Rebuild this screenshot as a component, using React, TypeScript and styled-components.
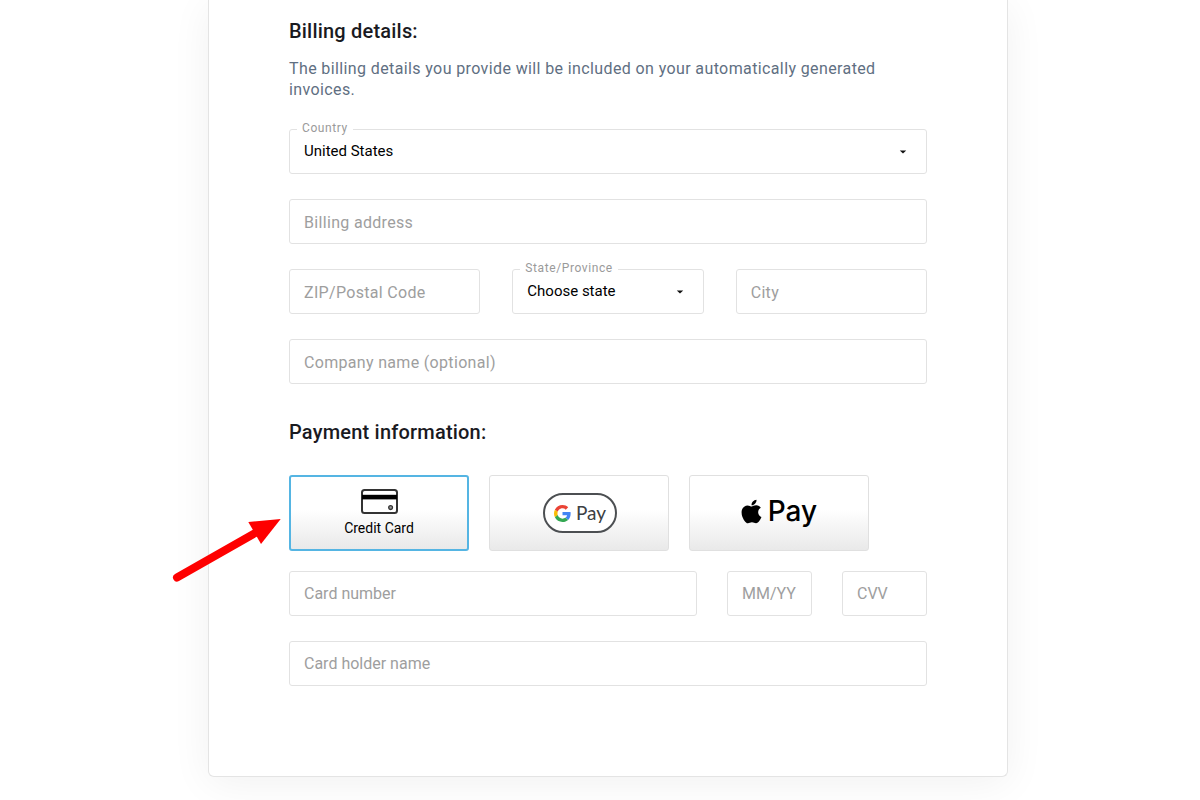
import React, { useState } from "react";
import styled, { createGlobalStyle, css } from "styled-components";
import { FaApple } from "react-icons/fa";

const GlobalStyle = createGlobalStyle`
  *, *::before, *::after { box-sizing: border-box; }
  body {
    margin: 0;
    background: #ffffff;
    font-family: Roboto, "Liberation Sans", sans-serif;
    color: #1a1a1a;
  }
`;

const Page = styled.main`
  display: flex;
  justify-content: center;
  padding: 0 16px 23px 32px;
  overflow: hidden;
`;

const Card = styled.form`
  width: 100%;
  max-width: 800px;
  padding: 19px 80px 90px;
  background: #ffffff;
  border: 1px solid #e4e4e4;
  border-top: 0;
  border-radius: 0 0 6px 6px;
  box-shadow: 0 6px 40px rgba(0, 0, 0, 0.06);
`;

const Heading = styled.h2`
  margin: 0;
  font-size: 20px;
  line-height: 24px;
  font-weight: 500;
  letter-spacing: 0.01em;
  color: #1a1a1f;
`;

const Note = styled.p`
  margin: 15px 0 29px;
  font-size: 16px;
  line-height: 21px;
  letter-spacing: 0.024em;
  color: #5f6f82;
`;

const Fields = styled.div`
  display: grid;
  gap: 25px;
`;

const LocationRow = styled.div`
  display: grid;
  grid-template-columns: repeat(3, minmax(0, 1fr));
  gap: 32px;
`;

const CardRow = styled.div`
  display: grid;
  grid-template-columns: minmax(0, 1fr) 85px 85px;
  gap: 30px;
`;

const fieldBox = css`
  width: 100%;
  height: 45px;
  border: 1px solid #e2e2e2;
  border-radius: 3px;
  background: #ffffff;
  font-family: inherit;
  outline: none;

  &:focus-visible {
    border-color: #4fb0dc;
  }
`;

const TextInput = styled.input<{ $tracked?: boolean }>`
  ${fieldBox}
  display: block;
  padding: ${(p) => (p.$tracked ? "2px 14px 0" : "0 14px")};
  font-size: 16px;
  letter-spacing: ${(p) => (p.$tracked ? "0.02em" : "normal")};
  color: #111111;

  &::placeholder {
    color: #9e9e9e;
    opacity: 1;
  }
`;

const SelectField = styled.div`
  position: relative;
`;

const FloatingLabel = styled.label`
  position: absolute;
  top: -8px;
  left: 8px;
  padding: 0 5px;
  background: #ffffff;
  font-size: 12px;
  line-height: 14px;
  letter-spacing: 0.05em;
  color: #9a9a9a;
`;

const Select = styled.select`
  ${fieldBox}
  display: block;
  appearance: none;
  padding: 0 40px 1px 14px;
  font-size: 15px;
  color: #000000;
`;

const Caret = styled.svg`
  position: absolute;
  top: 21px;
  right: 20px;
  width: 8px;
  height: 4px;
  fill: #111111;
  pointer-events: none;
`;

const PaymentHeading = styled(Heading)`
  margin-top: 36px;
`;

const Methods = styled.div`
  position: relative;
  display: grid;
  grid-template-columns: repeat(3, minmax(0, 180px));
  gap: 20px;
  margin: 31px 0 20px;
`;

const Method = styled.button<{ $selected: boolean }>`
  display: flex;
  flex-direction: column;
  align-items: center;
  justify-content: center;
  height: 76px;
  padding: 0;
  border: ${(p) => (p.$selected ? "2px solid #55b5e3" : "1px solid #e0e0e0")};
  border-radius: 3px;
  background: linear-gradient(#ffffff 45%, #e9e9e9);
  font-family: inherit;
  color: #000000;
  cursor: pointer;
`;

const MethodName = styled.span`
  margin-top: 5px;
  font-size: 14px;
  line-height: 18px;
`;

const GooglePill = styled.span`
  display: flex;
  align-items: center;
  justify-content: center;
  gap: 5px;
  width: 74px;
  height: 40px;
  margin-left: 2px;
  border: 2px solid #4c4f52;
  border-radius: 20px;
  background: #ffffff;
  font-family: Lato, Roboto, sans-serif;
  font-size: 19px;
  line-height: 24px;
  color: #3c4043;
`;

const AppleMark = styled.span`
  display: flex;
  align-items: center;
  gap: 3px;
  padding: 0 3px 4px 0;
  font-family: Inter, Roboto, sans-serif;
  font-size: 28px;
  line-height: 32px;
  font-weight: 500;
`;

const Pointer = styled.svg`
  position: absolute;
  top: 40px;
  right: 100%;
  width: 120px;
  height: 72px;
  pointer-events: none;
`;

function CreditCardIcon() {
  return (
    <svg width="37" height="25" viewBox="0 0 37 25" aria-hidden="true">
      <rect x="1" y="1" width="35" height="23" rx="2.5" fill="#fff" stroke="#333" strokeWidth="2" />
      <rect x="1" y="5.8" width="35" height="4.6" fill="#000" />
      <circle cx="29.6" cy="18.6" r="1.9" fill="#999" stroke="#333" strokeWidth="1.3" />
    </svg>
  );
}

function GoogleIcon() {
  return (
    <svg width="17" height="17" viewBox="0 0 48 48" aria-hidden="true">
      <path fill="#EA4335" d="M24 9.500c3.540 0 6.710 1.220 9.210 3.600l6.850-6.850C35.900 2.380 30.470 0 24 0 14.620 0 6.510 5.380 2.560 13.220l7.980 6.190C12.430 13.720 17.740 9.500 24 9.500z" />
      <path fill="#4285F4" d="M46.980 24.550c0-1.570-.15-3.090-.38-4.550H24v9.020h12.940c-.58 2.960-2.260 5.480-4.780 7.180l7.730 6c4.510-4.180 7.090-10.360 7.090-17.650z" />
      <path fill="#FBBC05" d="M10.530 28.590c-.48-1.450-.76-2.990-.76-4.590s.27-3.140.76-4.590l-7.980-6.190C.92 16.460 0 20.120 0 24c0 3.880.92 7.540 2.560 10.780l7.970-6.190z" />
      <path fill="#34A853" d="M24 48c6.480 0 11.930-2.130 15.890-5.810l-7.730-6c-2.150 1.450-4.920 2.300-8.160 2.300-6.260 0-11.570-4.220-13.470-9.910l-7.980 6.190C6.510 42.620 14.620 48 24 48z" />
    </svg>
  );
}

function SelectCaret() {
  return (
    <Caret viewBox="0 0 8 4" aria-hidden="true">
      <path d="M.8.5h6.400L4 3.500z" />
    </Caret>
  );
}

export default function App() {
  const [method, setMethod] = useState("card");

  return (
    <>
      <GlobalStyle />
      <Page>
        <Card onSubmit={(e) => e.preventDefault()}>
          <Heading>Billing details:</Heading>
          <Note>
            The billing details you provide will be included on your automatically generated invoices.
          </Note>
          <Fields>
            <SelectField>
              <Select id="country" defaultValue="us">
                <option value="us">United States</option>
              </Select>
              <FloatingLabel htmlFor="country">Country</FloatingLabel>
              <SelectCaret />
            </SelectField>
            <TextInput $tracked aria-label="Billing address" placeholder="Billing address" />
            <LocationRow>
              <TextInput $tracked aria-label="ZIP/Postal Code" placeholder="ZIP/Postal Code" />
              <SelectField>
                <Select id="state" defaultValue="">
                  <option value="">Choose state</option>
                </Select>
                <FloatingLabel htmlFor="state">State/Province</FloatingLabel>
                <SelectCaret />
              </SelectField>
              <TextInput $tracked aria-label="City" placeholder="City" />
            </LocationRow>
            <TextInput $tracked aria-label="Company name (optional)" placeholder="Company name (optional)" />
          </Fields>

          <PaymentHeading>Payment information:</PaymentHeading>
          <Methods>
            <Method type="button" $selected={method === "card"} aria-pressed={method === "card"} onClick={() => setMethod("card")}>
              <CreditCardIcon />
              <MethodName>Credit Card</MethodName>
            </Method>
            <Method type="button" $selected={method === "google"} aria-pressed={method === "google"} aria-label="Google Pay" onClick={() => setMethod("google")}>
              <GooglePill>
                <GoogleIcon />
                Pay
              </GooglePill>
            </Method>
            <Method type="button" $selected={method === "apple"} aria-pressed={method === "apple"} aria-label="Apple Pay" onClick={() => setMethod("apple")}>
              <AppleMark>
                <FaApple size={27} aria-hidden="true" />
                Pay
              </AppleMark>
            </Method>
            <Pointer viewBox="0 0 120 72" aria-hidden="true">
              <path d="M8 62.500 88 17" fill="none" stroke="#fe0000" strokeWidth="8" strokeLinecap="round" />
              <path d="M111.700 4 79.300 7 92 29z" fill="#fe0000" />
            </Pointer>
          </Methods>
          <Fields>
            <CardRow>
              <TextInput aria-label="Card number" placeholder="Card number" />
              <TextInput aria-label="Expiry date" placeholder="MM/YY" />
              <TextInput aria-label="CVV" placeholder="CVV" />
            </CardRow>
            <TextInput aria-label="Card holder name" placeholder="Card holder name" />
          </Fields>
        </Card>
      </Page>
    </>
  );
}
